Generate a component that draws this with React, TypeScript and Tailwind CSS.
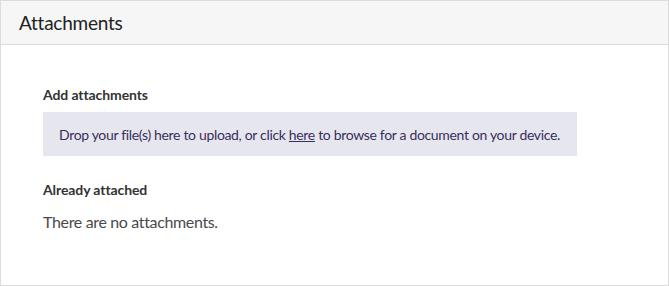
export default function App() {
  const font = { fontFamily: '"Source Sans Pro", Lato, "Noto Sans", sans-serif' };
  return (
    <div className="w-[669px] h-[286px] bg-white" style={font}>
      <div className="h-full border border-[#dcdcdc] flex flex-col">
        <div className="h-[44px] bg-[#f6f6f6] border-b border-[#dcdcdc] flex items-center pl-[18px]">
          <h1 className="text-[19px] tracking-[-0.25px] text-[#222] leading-none">Attachments</h1>
        </div>
        <div className="pl-[42px] pt-[41px]">
          <h2 className="text-[14px] tracking-[-0.1px] font-bold text-[#333] leading-[17px]">Add attachments</h2>
          <div className="mt-[9px] w-[534px] h-[44px] bg-[#e6e6ef] flex items-center pl-[16px]">
            <p className="text-[14px] tracking-[-0.33px] text-[#3a2f5c] whitespace-nowrap">
              Drop your file(s) here to upload, or click <span className="underline">here</span> to browse for a document on your device.
            </p>
          </div>
          <h2 className="mt-[25px] text-[14px] tracking-[-0.1px] font-bold text-[#333] leading-[17px]">Already attached</h2>
          <p className="mt-[14px] text-[16px] tracking-[-0.35px] text-[#4a4a4a] leading-[20px]">There are no attachments.</p>
        </div>
      </div>
    </div>
  );
}
